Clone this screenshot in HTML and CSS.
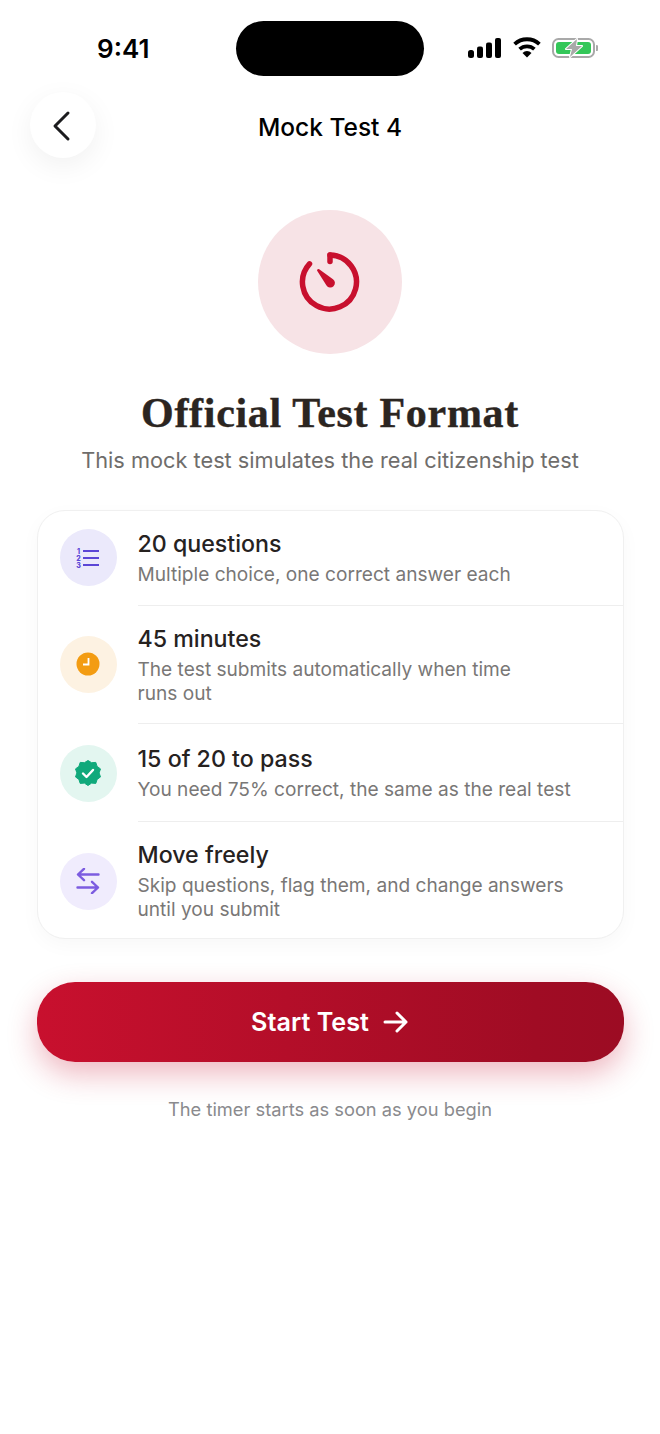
FILE: index.html
```html
<!DOCTYPE html>
<html lang="en">
<head>
    <meta charset="UTF-8">
    <meta name="viewport" content="width=device-width, initial-scale=1.0">
    <title>Mock Test 4</title>
    <link rel="stylesheet" href="styles.css">
</head>
<body>
    <div class="status-bar">
        <span class="clock">9:41</span>
        <div class="island"></div>
        <div class="status-icons">
            <svg width="34" height="20" viewBox="0 0 34 20" fill="#000">
                <rect x="0" y="12" width="6" height="8" rx="2.5"/>
                <rect x="9" y="8.5" width="6" height="11.5" rx="2"/>
                <rect x="18" y="4.5" width="6" height="15.5" rx="2"/>
                <rect x="27" y="0" width="6" height="20" rx="2"/>
            </svg>
            <svg width="28" height="21" viewBox="0 0 28 21" fill="none" stroke="#000" stroke-width="3.8">
                <path d="M1.6 7.2a18 18 0 0 1 24.8 0"/>
                <path d="M6.6 12.2a11 11 0 0 1 14.8 0"/>
                <path d="M9.500 16l4.500 4.500 4.500-4.500a6.200 6.200 0 0 0-9 0z" fill="#000" stroke="none"/>
            </svg>
            <svg class="battery" width="46" height="20" viewBox="0 0 46 20" fill="none">
                <rect x="1" y="1" width="41" height="18" rx="5.500" stroke="#a9a9a9" stroke-width="2"/>
                <rect x="4" y="4" width="35" height="12" rx="3" fill="#34c759"/>
                <path d="M44 7a3 3 0 0 1 0 6z" fill="#a9a9a9"/>
                <path d="M25 1L14 11h6l-2 8 12-11h-6z" fill="#a9a9a9" stroke="#fff" stroke-width="2" stroke-linejoin="round" paint-order="stroke"/>
            </svg>
        </div>
    </div>

    <header class="top-bar">
        <button class="back-btn" aria-label="Back">
            <svg width="24" height="32" viewBox="0 0 24 32" fill="none" stroke="#1c1c1e" stroke-width="3" stroke-linecap="round" stroke-linejoin="round">
                <path d="M18 3L5 16l13 13"/>
            </svg>
        </button>
        <h2 class="page-title">Mock Test 4</h2>
    </header>

    <main class="content">
        <div class="hero-icon">
            <svg width="64" height="64" viewBox="0 0 64 64" fill="none">
                <path d="M32 5a27 27 0 1 1-20.500 8.800" stroke="#c8102e" stroke-width="5.500" stroke-linecap="round"/>
                <path d="M32 5v6.500" stroke="#c8102e" stroke-width="5.500" stroke-linecap="round"/>
                <path d="M19 20.500a1.500 1.500 0 0 1 2.200-1.300l13.800 10a4.600 4.600 0 1 1-6.500 6.300z" fill="#c8102e"/>
            </svg>
        </div>

        <h1>Official Test Format</h1>
        <p class="lead">This mock test simulates the real citizenship test</p>

        <section class="info-card">
            <div class="info-row">
                <div class="badge badge-indigo">
                    <svg width="26" height="24" viewBox="0 -2 26 24" fill="none" stroke="#5b46d6" stroke-width="2">
                        <path d="M8 3h16M8 10h16M8 17h16"/>
                        <g class="list-digits">
                            <text x="3.500" y="5.500">1</text>
                            <text x="3.500" y="12.500">2</text>
                            <text x="3.500" y="19.500">3</text>
                        </g>
                    </svg>
                </div>
                <div class="info-text">
                    <h3>20 questions</h3>
                    <p>Multiple choice, one correct answer each</p>
                </div>
            </div>
            <div class="info-row">
                <div class="badge badge-amber">
                    <svg width="24" height="24" viewBox="0 0 24 24">
                        <circle cx="12" cy="12" r="11.500" fill="#f39c12"/>
                        <path d="M12.500 6v6.500H7" fill="none" stroke="#fff" stroke-width="1.800"/>
                    </svg>
                </div>
                <div class="info-text">
                    <h3>45 minutes</h3>
                    <p>The test submits automatically when time<br>runs out</p>
                </div>
            </div>
            <div class="info-row">
                <div class="badge badge-green">
                    <svg width="26" height="26" viewBox="0 0 26 26">
                        <path d="M13 .5l3.600 2.200 4.200-.3 1.300 4 3.400 2.500-1.400 4 1.400 4-3.400 2.500-1.300 4-4.200-.3L13 25.500l-3.600-2.400-4.200.3-1.300-4L.5 16.900l1.400-4-1.400-4 3.400-2.500 1.300-4 4.200.3z" fill="#10a97b" stroke="#10a97b" stroke-linejoin="round"/>
                        <path d="M8 13.500l3.500 3.500L18 10" fill="none" stroke="#fff" stroke-width="2.400" stroke-linecap="round" stroke-linejoin="round"/>
                    </svg>
                </div>
                <div class="info-text">
                    <h3>15 of 20 to pass</h3>
                    <p>You need 75% correct, the same as the real test</p>
                </div>
            </div>
            <div class="info-row">
                <div class="badge badge-violet">
                    <svg width="24" height="26" viewBox="0 0 24 26" fill="none" stroke="#7c5ce0" stroke-width="2.400" stroke-linecap="round" stroke-linejoin="round">
                        <path d="M22.500 6.500H2M8 .8L2 6.500l6 5.700"/>
                        <path d="M1.500 19.500H22M16 13.800l6 5.700-6 5.700"/>
                    </svg>
                </div>
                <div class="info-text">
                    <h3>Move freely</h3>
                    <p>Skip questions, flag them, and change answers<br>until you submit</p>
                </div>
            </div>
        </section>

        <button class="start-btn">
            Start Test
            <svg width="26" height="24" viewBox="0 0 26 24" fill="none" stroke="#fff" stroke-width="3" stroke-linecap="round" stroke-linejoin="round">
                <path d="M2 12h21M14 3l9 9-9 9"/>
            </svg>
        </button>
        <p class="hint">The timer starts as soon as you begin</p>
    </main>
</body>
</html>
```

FILE: styles.css
```css
/* General Reset */
* {
    margin: 0;
    padding: 0;
    box-sizing: border-box;
    font-family: 'Inter', 'Liberation Sans', sans-serif;
}

body {
    background: #fff;
    color: #26221f;
    width: 660px;
    height: 1434px;
    overflow: hidden;
}

/* Status bar */
.status-bar {
    height: 92px;
    padding-top: 21px;
    position: relative;
}

.clock {
    position: absolute;
    left: 97px;
    top: 33px;
    font-size: 26px;
    line-height: 32px;
    font-weight: 600;
    color: #000;
}

.island {
    width: 188px;
    height: 55px;
    margin: 0 auto;
    background: #000;
    border-radius: 28px;
}

.status-icons {
    position: absolute;
    left: 468px;
    top: 37px;
    display: flex;
    align-items: center;
    gap: 11px;
}

/* Header */
.top-bar {
    height: 66px;
    padding-left: 30px;
    position: relative;
    display: flex;
    align-items: center;
}

.back-btn {
    width: 66px;
    height: 66px;
    border: none;
    border-radius: 50%;
    background: #fff;
    box-shadow: 0 8px 28px rgba(0, 0, 0, 0.06);
    display: flex;
    align-items: center;
    justify-content: center;
    padding: 2px 3px 0 0;
}

.page-title {
    position: absolute;
    left: 0;
    right: 0;
    top: 17px;
    text-align: center;
    font-size: 24.500px;
    line-height: 36px;
    font-weight: 500;
    color: #000;
}

/* Content */
.content {
    padding: 52px 37px 0;
    display: flex;
    flex-direction: column;
    align-items: center;
}

.hero-icon {
    width: 144px;
    height: 144px;
    border-radius: 50%;
    background: #f7e3e6;
    display: flex;
    align-items: center;
    justify-content: center;
}

h1 {
    margin-top: 34px;
    font-family: 'Liberation Serif', serif;
    font-size: 42px;
    line-height: 50px;
    letter-spacing: 0.7px;
    font-weight: 700;
    color: #2b2521;
    -webkit-text-stroke: 0.4px #2b2521;
    white-space: nowrap;
}

.lead {
    margin-top: 8px;
    font-size: 21.750px;
    line-height: 28px;
    color: #6f6d6b;
    white-space: nowrap;
}

/* Info card */
.info-card {
    width: 587px;
    margin-top: 36px;
    background: #fff;
    border: 1px solid #f0f0f0;
    border-radius: 28px;
    box-shadow: 0 6px 20px rgba(0, 0, 0, 0.03);
    overflow: hidden;
}

.info-row {
    display: flex;
    align-items: center;
    padding-left: 22px;
    gap: 21px;
}

.info-row:nth-child(-n+2) .badge {
    margin-bottom: 2px;
}

.info-row:last-child .badge {
    margin-top: 2px;
}

.info-text {
    flex: 1;
    padding: 18px 0 19px;
    border-bottom: 1px solid #eeeeee;
}

.info-row:nth-child(2) .info-text {
    padding-bottom: 18px;
}

.info-row:nth-child(3) .info-text {
    padding: 20px 0 20px;
}

.info-row:last-child .info-text {
    padding-bottom: 17px;
    border-bottom: none;
}

.info-text h3 {
    font-size: 23.200px;
    line-height: 31px;
    font-weight: 550;
    color: #26221f;
}

.info-text p {
    font-size: 19.100px;
    line-height: 24px;
    color: #797776;
    margin-top: 2px;
}

.badge {
    flex: none;
    width: 57px;
    height: 57px;
    border-radius: 50%;
    display: flex;
    align-items: center;
    justify-content: center;
}

.badge-indigo { background: #ebe9fb; }
.badge-amber { background: #fdf2e2; }
.badge-green { background: #e3f6f0; }
.badge-violet { background: #f0ecfd; }

.list-digits text {
    fill: #5b46d6;
    stroke: none;
    font-size: 7px;
    font-weight: 800;
    text-anchor: middle;
}

/* Start button */
.start-btn {
    width: 587px;
    height: 80px;
    margin-top: 43px;
    border: none;
    border-radius: 38px;
    background: linear-gradient(90deg, #c8102e 0%, #a00c24 85%, #9c0c23 100%);
    box-shadow: 0 12px 30px rgba(200, 16, 46, 0.3);
    color: #fff;
    font-size: 25.200px;
    font-weight: 600;
    display: flex;
    align-items: center;
    justify-content: center;
    gap: 14px;
}

.hint {
    margin-top: 36px;
    font-size: 18.300px;
    line-height: 22px;
    color: #8a8a8d;
}
```
